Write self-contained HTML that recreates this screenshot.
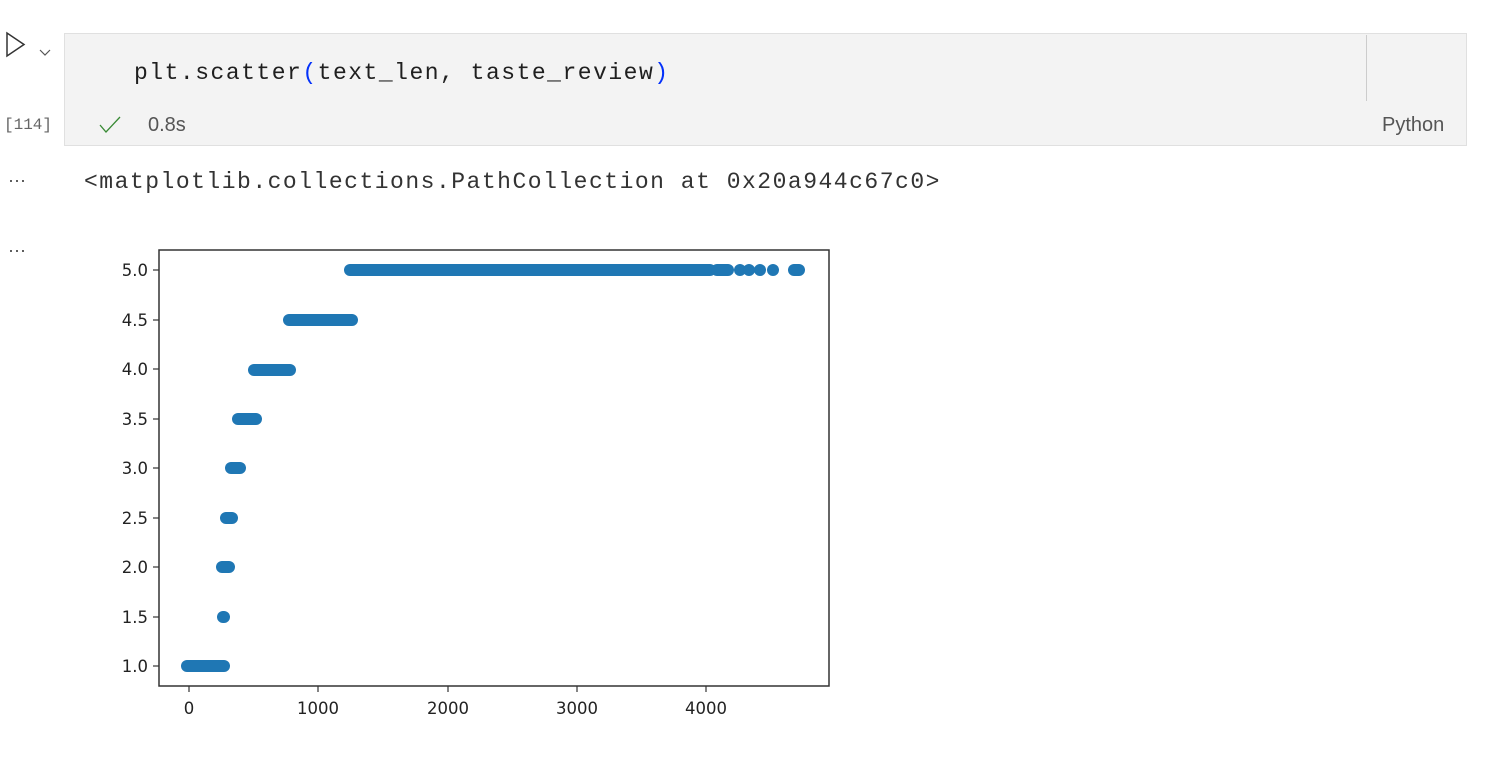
<!DOCTYPE html>
<html><head><meta charset="utf-8"><style>
body{margin:0;width:1488px;height:768px;background:#fff;position:relative;overflow:hidden;font-family:"Liberation Sans",sans-serif}
.cell{position:absolute;left:64px;top:33px;width:1401px;height:111px;background:#f3f3f3;border:1px solid #e0e0e0}
.code{position:absolute;left:134px;top:60px;font:23px "Liberation Mono",monospace;color:#1f1f1f;letter-spacing:1.5px}
.out{position:absolute;left:84px;top:169px;font:23px "Liberation Mono",monospace;color:#333;letter-spacing:1.5px}
.t{position:absolute;font-size:20px;color:#555}
</style></head><body>
<svg style="position:absolute;left:0;top:0" width="70" height="70">
<path d="M7 43 L7 66 L24 54.5 Z" transform="translate(0,-10)" fill="none" stroke="#333" stroke-width="1.5"/>
<path d="M40 52 L45 57 L50 52" transform="translate(0,-2)" fill="none" stroke="#555" stroke-width="1.2"/>
</svg>
<div class="cell"></div>
<div style="position:absolute;left:1366px;top:35px;width:1px;height:66px;background:#ccc"></div>
<div class="code">plt.scatter<span style="color:#0431fa">(</span>text_len, taste_review<span style="color:#0431fa">)</span></div>
<div style="position:absolute;left:4px;top:116px;font:16px 'Liberation Mono',monospace;color:#666">[114]</div>
<svg style="position:absolute;left:98px;top:114px" width="26" height="22"><path d="M2 11 L8 18 L22 3" fill="none" stroke="#388a34" stroke-width="1.3"/></svg>
<div class="t" style="left:148px;top:114px">0.8s</div>
<div class="t" style="left:1382px;top:114px">Python</div>
<div style="position:absolute;left:8px;top:170px;font-size:18px;color:#444">···</div>
<div style="position:absolute;left:8px;top:240px;font-size:18px;color:#444">···</div>
<div class="out">&lt;matplotlib.collections.PathCollection at 0x20a944c67c0&gt;</div>
<svg style="position:absolute;left:0;top:0" width="1488" height="768" font-family="DejaVu Sans, sans-serif" font-size="16.5" fill="#222">
<rect x="159" y="250" width="670" height="436" fill="none" stroke="#333" stroke-width="1.5"/>
<g stroke="#333" stroke-width="1.2">
<line x1="153" y1="270" x2="159" y2="270"/><line x1="153" y1="320" x2="159" y2="320"/><line x1="153" y1="369" x2="159" y2="369"/><line x1="153" y1="419" x2="159" y2="419"/><line x1="153" y1="468" x2="159" y2="468"/><line x1="153" y1="518" x2="159" y2="518"/><line x1="153" y1="567" x2="159" y2="567"/><line x1="153" y1="617" x2="159" y2="617"/><line x1="153" y1="666" x2="159" y2="666"/>
<line x1="189" y1="686" x2="189" y2="692"/><line x1="318" y1="686" x2="318" y2="692"/><line x1="448" y1="686" x2="448" y2="692"/><line x1="577" y1="686" x2="577" y2="692"/><line x1="706" y1="686" x2="706" y2="692"/>
</g>
<g text-anchor="end">
<text x="148" y="276">5.0</text><text x="148" y="326">4.5</text><text x="148" y="375">4.0</text><text x="148" y="425">3.5</text><text x="148" y="474">3.0</text><text x="148" y="524">2.5</text><text x="148" y="573">2.0</text><text x="148" y="623">1.5</text><text x="148" y="672">1.0</text>
</g>
<g text-anchor="middle">
<text x="189" y="714">0</text><text x="318" y="714">1000</text><text x="448" y="714">2000</text><text x="577" y="714">3000</text><text x="706" y="714">4000</text>
</g>
<g stroke="#1f77b4" stroke-width="12" stroke-linecap="round">
<line x1="187" y1="666" x2="224" y2="666"/>
<line x1="223" y1="617" x2="224" y2="617"/>
<line x1="222" y1="567" x2="229" y2="567"/>
<line x1="226" y1="518" x2="232" y2="518"/>
<line x1="231" y1="468" x2="240" y2="468"/>
<line x1="238" y1="419" x2="256" y2="419"/>
<line x1="254" y1="370" x2="290" y2="370"/>
<line x1="289" y1="320" x2="352" y2="320"/>
<line x1="350" y1="270" x2="710" y2="270"/>
<line x1="717" y1="270" x2="728" y2="270"/>
<line x1="740" y1="270" x2="740" y2="270"/><line x1="749" y1="270" x2="749" y2="270"/><line x1="760" y1="270" x2="760" y2="270"/><line x1="773" y1="270" x2="773" y2="270"/>
<line x1="794" y1="270" x2="799" y2="270"/>
</g>
</svg>
</body></html>
